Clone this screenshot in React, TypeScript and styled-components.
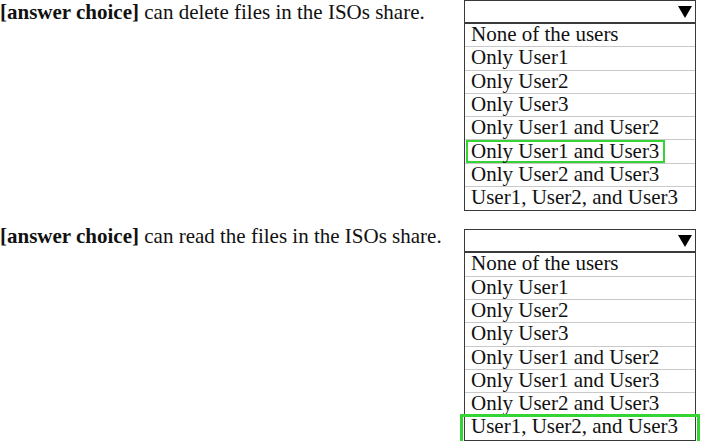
import styled, { createGlobalStyle } from "styled-components";

const GlobalStyle = createGlobalStyle`
  html, body {
    margin: 0;
    padding: 0;
    background: #ffffff;
  }
  body {
    font-family: "Liberation Serif", "Times New Roman", serif;
    color: #111111;
  }
`;

const Page = styled.div`
  width: 701px;
  height: 441px;
  overflow: hidden;
  display: flex;
  flex-direction: column;
  gap: 13px;
`;

const Question = styled.div`
  display: flex;
  align-items: flex-start;
`;

const Prompt = styled.div`
  width: 464px;
  font-size: 21px;
  line-height: 24px;
  white-space: nowrap;
  b {
    font-weight: bold;
  }
`;

const Dropdown = styled.div<{ $top: number }>`
  margin-top: ${(p) => p.$top}px;
  width: 230px;
  border: 1.5px solid #3a3a3a;
  position: relative;
  background: #fff;
`;

const Header = styled.div`
  height: 21px;
  border-bottom: 2px solid #3a3a3a;
  display: flex;
  justify-content: flex-end;
  align-items: center;
  padding-right: 3px;
`;

const Arrow = styled.span`
  width: 0;
  height: 0;
  border-left: 7px solid transparent;
  border-right: 7px solid transparent;
  border-top: 12px solid #000;
`;

const Option = styled.div`
  height: 23.3px;
  box-sizing: border-box;
  padding-left: 6px;
  font-size: 21px;
  line-height: 21px;
  white-space: nowrap;
  border-bottom: 1.5px solid #c9c9c9;
  position: relative;
  &:last-child {
    border-bottom: none;
  }
`;

const TextMark = styled.span`
  display: inline-block;
  margin-left: -5px;
  padding: 0 4px 0 3px;
  border: 2px solid #35d435;
  line-height: 18px;
  height: 19px;
`;

const RowMark = styled.div`
  position: absolute;
  left: -5px;
  right: -5px;
  top: -2px;
  bottom: -4px;
  border: 3px solid #35d435;
  pointer-events: none;
`;

const choices = [
  "None of the users",
  "Only User1",
  "Only User2",
  "Only User3",
  "Only User1 and User2",
  "Only User1 and User3",
  "Only User2 and User3",
  "User1, User2, and User3",
];

const questions = [
  { text: "can delete files in the ISOs share.", top: 0, mark: 5, style: "text" },
  { text: "can read the files in the ISOs share.", top: 5, mark: 7, style: "row" },
];

export default function App() {
  return (
    <>
      <GlobalStyle />
      <Page>
        {questions.map((q) => (
          <Question key={q.text}>
            <Prompt>
              <b>[answer choice]</b> {q.text}
            </Prompt>
            <Dropdown $top={q.top}>
              <Header>
                <Arrow />
              </Header>
              {choices.map((c, i) => (
                <Option key={c}>
                  {i === q.mark && q.style === "text" ? <TextMark>{c}</TextMark> : c}
                  {i === q.mark && q.style === "row" && <RowMark />}
                </Option>
              ))}
            </Dropdown>
          </Question>
        ))}
      </Page>
    </>
  );
}
